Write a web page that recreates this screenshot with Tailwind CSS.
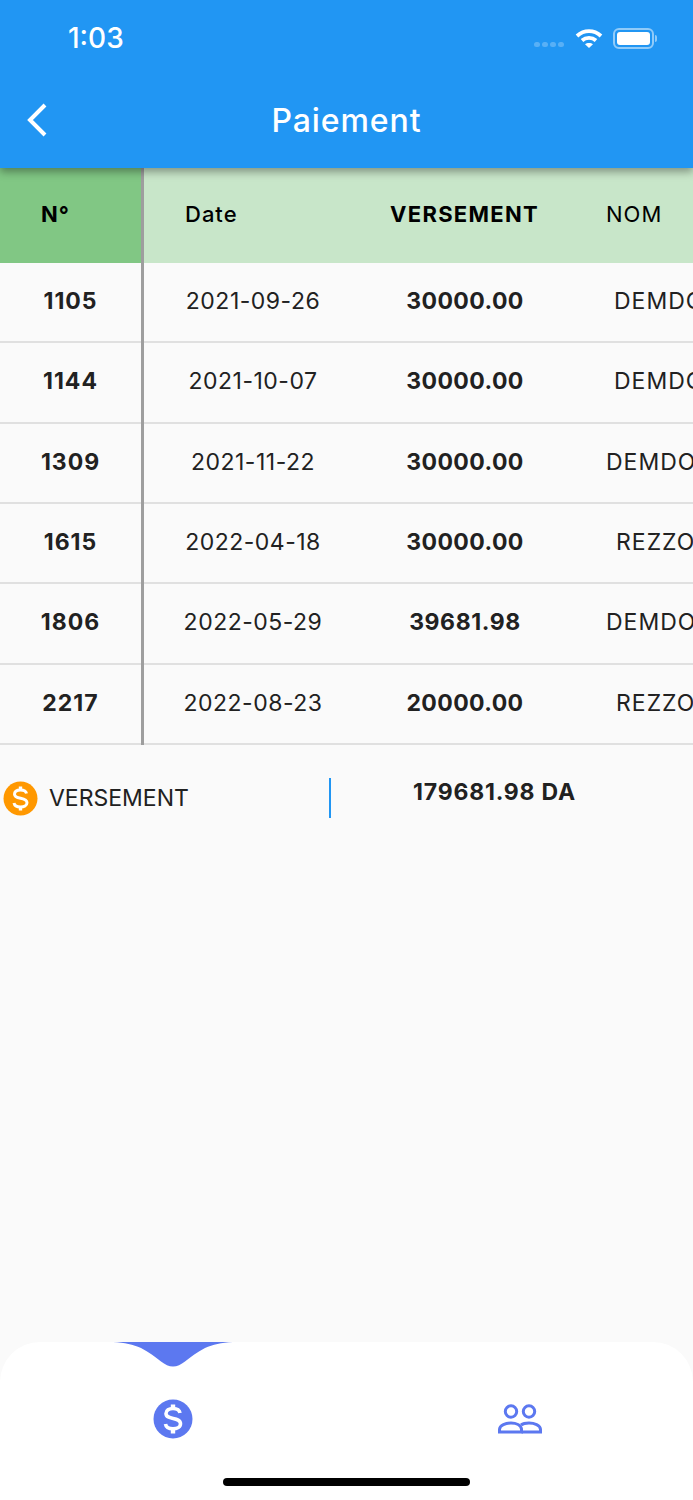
<!DOCTYPE html>
<html lang="fr">
<head>
  <meta charset="UTF-8">
  <meta name="viewport" content="width=device-width, initial-scale=1.0">
  <title>Paiement</title>
  <script src="https://cdn.jsdelivr.net/npm/@tailwindcss/browser@4"></script>
</head>
<body class="bg-[#fafafa] font-[Inter,sans-serif] text-[#212121]">
  <div class="relative h-[1500px] w-[693px] overflow-hidden flex flex-col">
    <!-- App bar -->
    <header class="relative z-10 h-[168px] shrink-0 bg-[#2196f3] text-white shadow-[0_4px_8px_rgba(0,0,0,0.35)]">
      <div class="flex h-[76px] items-center justify-between pl-[68px] pr-[36px]">
        <span class="text-[28px] font-medium">1:03</span>
        <div class="flex items-center">
          <div class="mt-[12px] mr-[11px] flex gap-[2px]">
            <span class="h-[5px] w-[6px] rounded-full bg-white/25"></span>
            <span class="h-[5px] w-[6px] rounded-full bg-white/25"></span>
            <span class="h-[5px] w-[6px] rounded-full bg-white/25"></span>
            <span class="h-[5px] w-[6px] rounded-full bg-white/25"></span>
          </div>
          <svg class="mr-[10px]" width="28" height="21" viewBox="0 0 28 21" fill="none" stroke="white" stroke-width="3.8">
            <path d="M2 8 C9 1.5 19 1.5 26 8"/>
            <path d="M7 12.5 C11 9 17 9 21 12.5"/>
            <path d="M14 20 L10 16.3 C12 14.6 16 14.6 18 16.3 Z" fill="white" stroke="none"/>
          </svg>
          <div class="flex items-center">
            <div class="h-[21px] w-[41px] rounded-[6px] border-2 border-white/50 p-[2px]">
              <div class="h-full w-full rounded-[3px] bg-white"></div>
            </div>
            <div class="ml-[1px] h-[7px] w-[2px] rounded-r-full bg-white/50"></div>
          </div>
        </div>
      </div>
      <div class="relative flex h-[88px] items-center justify-center pt-[2px]">
        <svg class="absolute left-[26px] top-[27px]" width="22" height="34" viewBox="0 0 22 34" fill="none" stroke="white" stroke-width="4">
          <path d="M19 2 L4 17 L19 32"/>
        </svg>
        <h1 class="text-[32px] font-medium tracking-[0.9px]">Paiement</h1>
      </div>
    </header>

    <!-- Table -->
    <main class="flex w-full">
      <div class="w-[141px] shrink-0">
        <div class="flex h-[95px] items-center justify-start bg-[#81c784] pb-[3px] pl-[41px] text-[22px] font-bold tracking-[1px] text-black">N°</div>
        <div class="flex h-[80.33px] items-center justify-center border-b-2 border-[#e0e0e0] pb-[2px] text-[23px] font-bold tracking-[1px]">1105</div>
        <div class="flex h-[80.33px] items-center justify-center border-b-2 border-[#e0e0e0] pb-[2px] text-[23px] font-bold tracking-[1px]">1144</div>
        <div class="flex h-[80.33px] items-center justify-center border-b-2 border-[#e0e0e0] pb-[2px] text-[23px] font-bold tracking-[1px]">1309</div>
        <div class="flex h-[80.33px] items-center justify-center border-b-2 border-[#e0e0e0] pb-[2px] text-[23px] font-bold tracking-[1px]">1615</div>
        <div class="flex h-[80.33px] items-center justify-center border-b-2 border-[#e0e0e0] pb-[2px] text-[23px] font-bold tracking-[1px]">1806</div>
        <div class="flex h-[80.33px] items-center justify-center border-b-2 border-[#e0e0e0] pb-[2px] text-[23px] font-bold tracking-[1px]">2217</div>
      </div>
      <div class="w-[3px] shrink-0 bg-[#9e9e9e]"></div>
      <div class="min-w-0 flex-1 overflow-hidden">
        <div class="flex h-[95px] items-center bg-[#c8e6c9] pb-[3px] text-[22px] text-black">
          <span class="w-[246px] shrink-0 pl-[41px] font-medium tracking-[1px]">Date</span>
          <span class="w-[148px] shrink-0 font-bold tracking-[1.3px]">VERSEMENT</span>
          <span class="pl-[68px] whitespace-nowrap tracking-[1px]">NOM</span>
        </div>
        <div class="flex h-[80.33px] items-center border-b-2 border-[#e0e0e0] pb-[2px] text-[23px] whitespace-nowrap"><span class="w-[218px] shrink-0 text-center tracking-[0.5px]">2021-09-26</span><span class="w-[206px] shrink-0 text-center font-bold tracking-[0.4px]">30000.00</span><span class="pl-[46px] tracking-[1px]">DEMDO</span></div>
        <div class="flex h-[80.33px] items-center border-b-2 border-[#e0e0e0] pb-[2px] text-[23px] whitespace-nowrap"><span class="w-[218px] shrink-0 text-center tracking-[0.5px]">2021-10-07</span><span class="w-[206px] shrink-0 text-center font-bold tracking-[0.4px]">30000.00</span><span class="pl-[46px] tracking-[1px]">DEMDO</span></div>
        <div class="flex h-[80.33px] items-center border-b-2 border-[#e0e0e0] pb-[2px] text-[23px] whitespace-nowrap"><span class="w-[218px] shrink-0 text-center tracking-[0.5px]">2021-11-22</span><span class="w-[206px] shrink-0 text-center font-bold tracking-[0.4px]">30000.00</span><span class="pl-[38px] tracking-[1px]">DEMDO</span></div>
        <div class="flex h-[80.33px] items-center border-b-2 border-[#e0e0e0] pb-[2px] text-[23px] whitespace-nowrap"><span class="w-[218px] shrink-0 text-center tracking-[0.5px]">2022-04-18</span><span class="w-[206px] shrink-0 text-center font-bold tracking-[0.4px]">30000.00</span><span class="pl-[48px] tracking-[1px]">REZZO</span></div>
        <div class="flex h-[80.33px] items-center border-b-2 border-[#e0e0e0] pb-[2px] text-[23px] whitespace-nowrap"><span class="w-[218px] shrink-0 text-center tracking-[0.5px]">2022-05-29</span><span class="w-[206px] shrink-0 text-center font-bold tracking-[0.6px]">39681.98</span><span class="pl-[38px] tracking-[1px]">DEMDO</span></div>
        <div class="flex h-[80.33px] items-center border-b-2 border-[#e0e0e0] pb-[2px] text-[23px] whitespace-nowrap"><span class="w-[218px] shrink-0 text-center tracking-[0.5px]">2022-08-23</span><span class="w-[206px] shrink-0 text-center font-bold tracking-[0.4px]">20000.00</span><span class="pl-[48px] tracking-[1px]">REZZO</span></div>
      </div>
    </main>

    <!-- Total -->
    <section class="flex h-[107px] items-center pl-[3px] text-[23px]">
      <svg class="mt-[1px]" width="35" height="35" viewBox="0 0 35 35">
        <circle cx="17.5" cy="17.5" r="17" fill="#ff9800"/>
        <path d="M23.5 12.5 C23 10 20.5 9 17.5 9 C14 9 11.5 10.5 11.5 13.2 C11.5 19 24 15.5 24 21.8 C24 24.5 21 26 17.5 26 C14 26 11.5 24.6 11 22" fill="none" stroke="white" stroke-width="3"/>
        <path d="M17.5 5.5 V9 M17.5 26 V29.5" stroke="white" stroke-width="3.4"/>
      </svg>
      <span class="ml-[11px] w-[280px]">VERSEMENT</span>
      <div class="h-[40px] w-[2px] bg-[#2196f3]"></div>
      <span class="mb-[12px] ml-[82px] font-bold whitespace-nowrap tracking-[0.8px]">179681.98 DA</span>
    </section>

    <!-- Bottom nav -->
    <nav class="absolute bottom-0 left-0 h-[158px] w-full rounded-t-[40px] bg-white">
      <svg class="absolute left-[113px] top-0" width="120" height="25" viewBox="0 0 120 25">
        <path d="M0 0 C12 0.5 20 2.5 28 6 C36 10 42 15 48 19.5 C52 22.5 56 24.5 60 24.5 C64 24.5 68 22.5 72 19.5 C78 15 84 10 92 6 C100 2.5 108 0.5 120 0 Z" fill="#5c78f0"/>
      </svg>
      <div class="flex h-[154px] items-center">
        <div class="flex w-1/2 justify-center">
          <svg width="40" height="40" viewBox="0 0 40 40">
            <circle cx="20" cy="20" r="19.5" fill="#5c78f0"/>
            <path d="M27 14 C26.5 11 23.5 9.5 20 9.5 C16 9.5 13 11.3 13 14.5 C13 21.5 27.5 17.5 27.5 24.8 C27.5 28 24 29.8 20 29.8 C16 29.8 13 28.2 12.5 25" fill="none" stroke="white" stroke-width="3.6"/>
            <path d="M20 5.5 V9.5 M20 30 V34.5" stroke="white" stroke-width="4.4"/>
          </svg>
        </div>
        <div class="flex w-1/2 justify-center">
          <svg width="44" height="30" viewBox="0 0 44 30" fill="none" stroke="#5c78f0" stroke-width="3">
            <circle cx="13" cy="7.5" r="5.7"/>
            <circle cx="31" cy="7.5" r="5.7"/>
            <path d="M1.5 28 V25.5 C1.5 21 8 19 13 19 C18 19 23 21 23.5 25 V28 Z"/>
            <path d="M23 21 C25 19.5 28 19 31 19 C36 19 42.5 21 42.5 25.5 V28 H23.5"/>
          </svg>
        </div>
      </div>
      <div class="absolute bottom-[14px] left-[223px] h-[8px] w-[247px] rounded-full bg-black"></div>
    </nav>
  </div>
</body>
</html>
